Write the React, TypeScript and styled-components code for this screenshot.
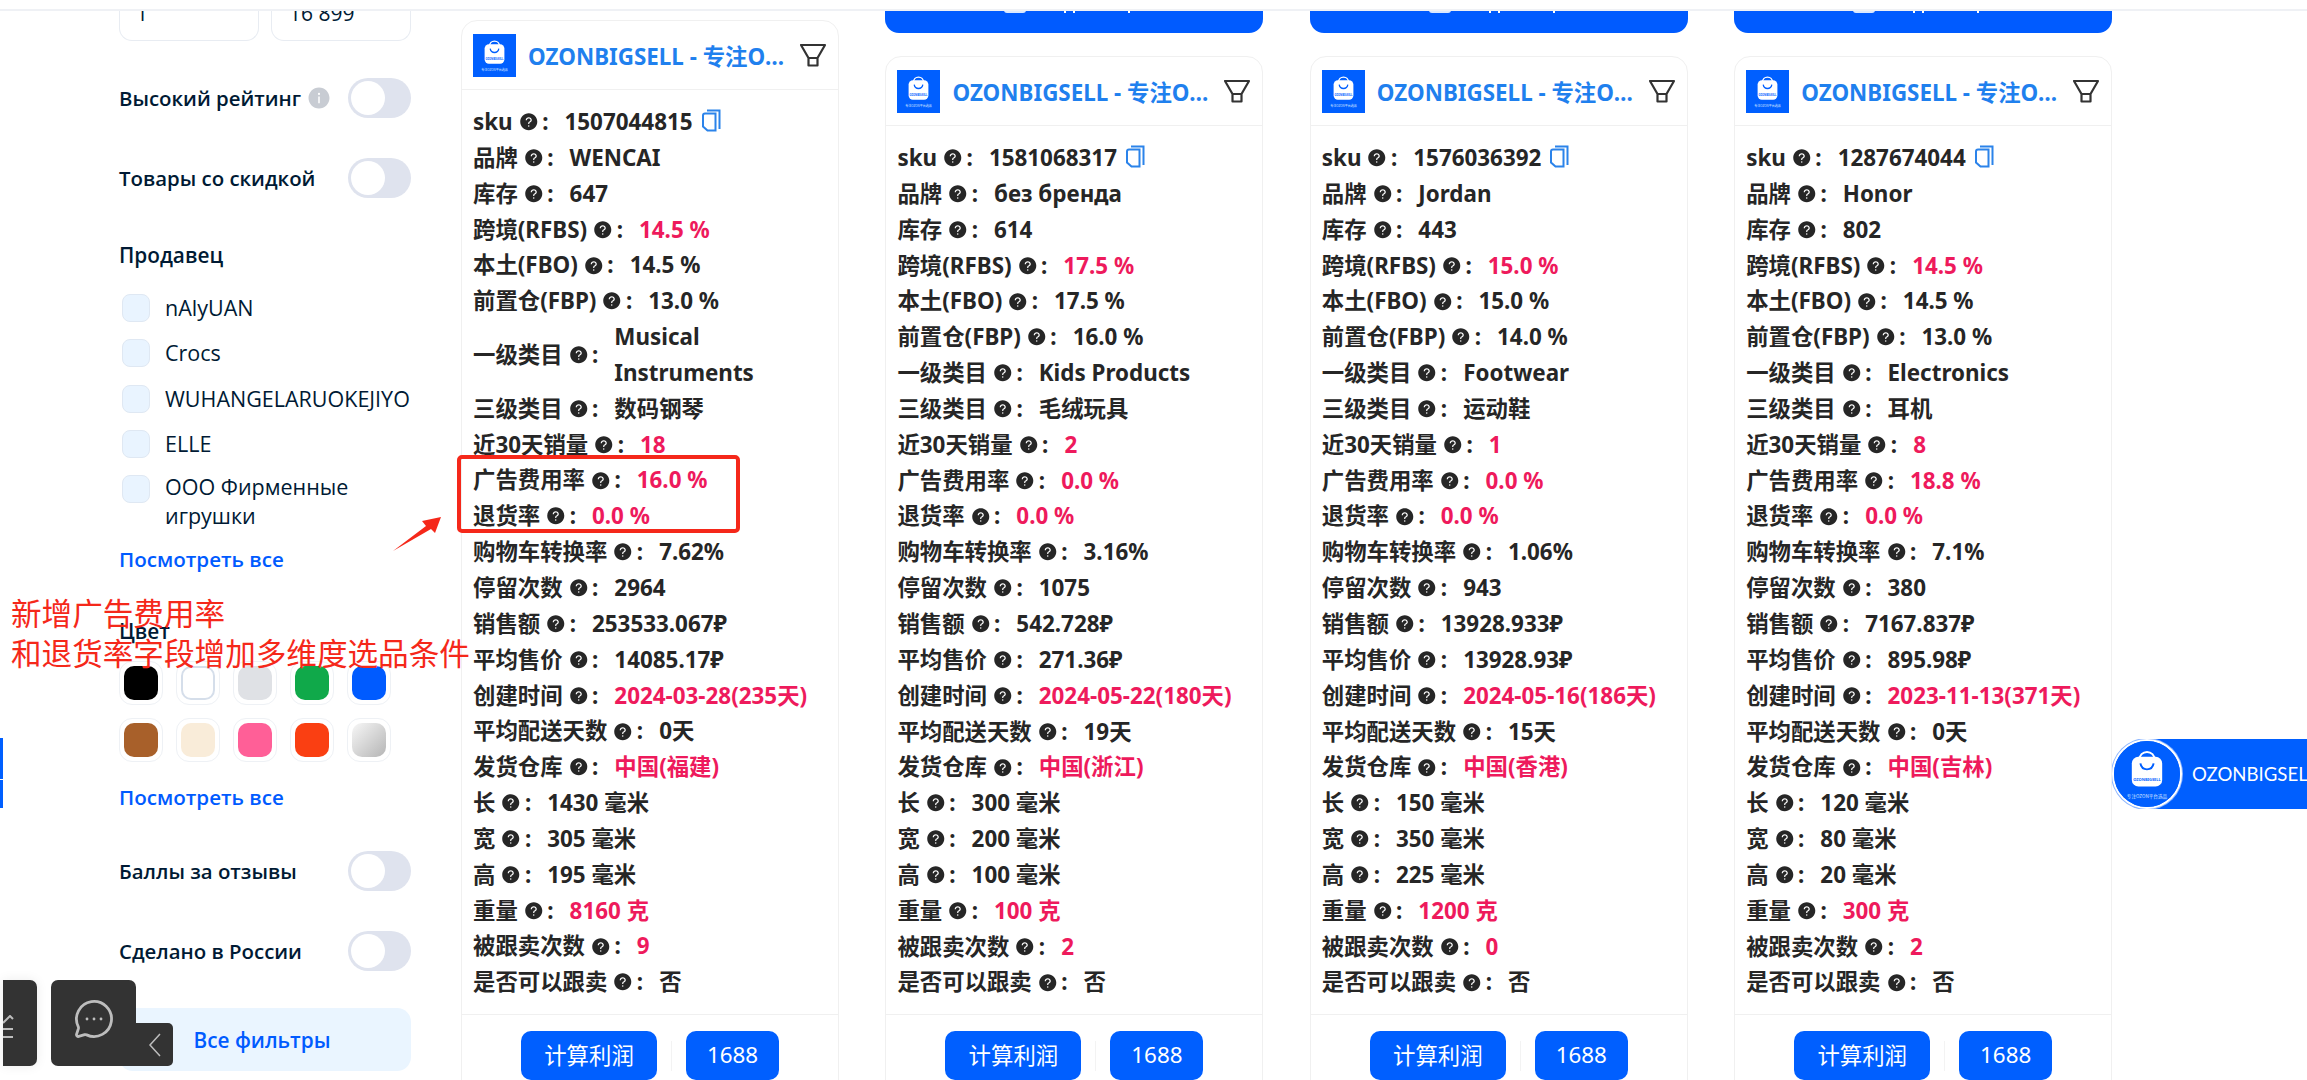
import React from "react";
import styled, { createGlobalStyle } from "styled-components";
import { AiFillQuestionCircle, AiFillInfoCircle } from "react-icons/ai";
import { MessageCircleMore } from "lucide-react";

const Global = createGlobalStyle`
  html, body { margin: 0; padding: 0; background: #fff; overflow: hidden; }
  * { box-sizing: border-box; }
`;

const Page = styled.div`
  position: relative;
  width: 2307px;
  height: 1080px;
  overflow: hidden;
  display: flex;
  background: #fff;
  font-family: "Noto Sans", "Noto Sans CJK SC", sans-serif;
`;

const TopBar = styled.div`
  position: absolute;
  left: 0;
  top: 0;
  width: 100%;
  height: 11px;
  background: #fff;
  border-bottom: 2px solid #eff1f5;
  z-index: 5;
`;

/* ---- sidebar ---- */
const Sidebar = styled.aside`
  width: 292px;
  margin-left: 119px;
  flex: none;
  display: flex;
  flex-direction: column;
  font-family: "Open Sans", "Noto Sans", sans-serif;
  color: #001a34;
`;
const RangeRow = styled.div`
  display: grid;
  grid-template-columns: 140px 140px;
  gap: 12px;
  height: 41px;
`;
const RangeInput = styled.div`
  border: 1px solid #e8ecf2;
  border-top: none;
  border-radius: 0 0 13px 13px;
  padding-left: ${(p: { $pad: number }) => p.$pad}px;
  font-size: 21px;
  line-height: 26px;
  color: #001a34;
`;
const ToggleRow = styled.div<{ $top: number }>`
  display: flex;
  align-items: center;
  height: 40px;
  margin-top: ${(p) => p.$top}px;
`;
const ToggleLabel = styled.span`
  font-size: 20.4px;
  font-weight: 600;
  white-space: nowrap;
  margin-top: -1px;
`;
const InfoMark = styled.span`
  display: inline-flex;
  margin-left: 6px;
  color: #c8ccd3;
`;
const Toggle = styled.span`
  margin-left: auto;
  width: 63px;
  height: 40px;
  border-radius: 20px;
  background: #dfe3ee;
  padding: 3px;
  display: flex;
`;
const Knob = styled.span`
  width: 34px;
  height: 34px;
  border-radius: 50%;
  background: #fff;
`;
const SectionTitle = styled.div<{ $top: number }>`
  font-size: 20.8px;
  font-weight: 600;
  line-height: 28px;
  height: 28px;
  margin-top: ${(p) => p.$top}px;
`;
const CheckList = styled.div`
  display: flex;
  flex-direction: column;
  gap: 17.3px;
  padding-top: 25px;
`;
const CheckRow = styled.div`
  display: flex;
  gap: 15px;
  padding-left: 3px;
`;
const CheckBox = styled.span`
  flex: none;
  width: 28px;
  height: 28px;
  border-radius: 8px;
  background: #e9f4ff;
  border: 1px solid #dfe8f3;
`;
const CheckText = styled.span<{ $wrap?: boolean }>`
  font-size: 21.5px;
  line-height: 29px;
  width: 246px;
  margin-top: ${(p) => (p.$wrap ? "-3px" : "-1px")};
  overflow: hidden;
  white-space: ${(p) => (p.$wrap ? "normal" : "nowrap")};
`;
const SeeAll = styled.a<{ $top: number }>`
  display: block;
  font-size: 20.6px;
  font-weight: 600;
  line-height: 28px;
  color: #005bff;
  margin-top: ${(p) => p.$top}px;
`;
const Swatches = styled.div`
  display: grid;
  grid-template-columns: repeat(5, 44px);
  gap: 13px;
  margin-top: 16px;
`;
const SwatchRing = styled.div`
  width: 44px;
  height: 44px;
  border-radius: 13px;
  border: 1px solid #eef1f5;
  padding: 4px;
`;
const SwatchFill = styled.div<{ $fill: string; $outlined?: boolean }>`
  width: 100%;
  height: 100%;
  border-radius: 10px;
  background: ${(p) => p.$fill};
  border: ${(p) => (p.$outlined ? "2px solid #d5deea" : "none")};
`;
const AllFilters = styled.button`
  margin-top: 37px;
  height: 63px;
  border: none;
  border-radius: 14px;
  background: #eaf5ff;
  color: #005bff;
  font: 600 20.8px "Open Sans", "Noto Sans", sans-serif;
  padding-left: 0;
`;

/* ---- product columns ---- */
const Columns = styled.main`
  margin-left: 50px;
  display: grid;
  grid-template-columns: repeat(4, 378px);
  column-gap: 46.4px;
  align-items: start;
`;
const Column = styled.section`
  display: flex;
  flex-direction: column;
`;
const FirstSpacer = styled.div`
  height: 20px;
`;
const Stub = styled.div`
  height: 33px;
  background: #005bff;
  border-radius: 0 0 14px 14px;
  margin-bottom: 23px;
  padding: 10px 0 0 119px;
  display: flex;
  align-items: flex-start;
`;
const StubBlob = styled.span`
  width: 22px;
  height: 3px;
  background: #dbe9ff;
  border-radius: 0 0 10px 10px;
`;
const StubTick = styled.span<{ $left: number }>`
  width: 2px;
  height: 3px;
  background: #fff;
  margin-left: ${(p) => p.$left}px;
`;
const Card = styled.article`
  border: 1px solid #f0f0f0;
  border-radius: 16px;
  height: 1100px;
  background: #fff;
`;
const CardHead = styled.header`
  height: 69px;
  border-bottom: 1px solid #f0f0f0;
  display: flex;
  align-items: center;
  padding: 0 12px 0 11px;
  gap: 12px;
`;
const CardTitle = styled.div`
  flex: 1;
  min-width: 0;
  font-size: 22.4px;
  font-weight: 700;
  color: #1f80ee;
  white-space: nowrap;
  overflow: hidden;
  text-overflow: ellipsis;
`;
const CardBody = styled.div`
  padding: 14px 11px 14px;
  font-size: 22.4px;
  line-height: 35.84px;
  font-weight: 700;
  color: #262626;
`;
const Row = styled.div`
  display: flex;
`;
const Label = styled.span`
  flex: none;
  display: inline-flex;
  align-items: center;
  white-space: nowrap;
`;
const Help = styled.span`
  display: inline-flex;
  margin: 0 4px 0 6px;
  color: #262626;
`;
const Colon = styled.span`
  margin-right: 16px;
`;
const Value = styled.span<{ $hot?: boolean }>`
  flex: 1;
  min-width: 0;
  color: ${(p) => (p.$hot ? "#ee1a5c" : "#262626")};
`;
const CopyMark = styled.svg`
  display: inline-block;
  vertical-align: -2px;
  margin-left: 8px;
`;
const CardFoot = styled.footer`
  border-top: 1px solid #f0f0f0;
  padding-top: 16px;
  display: flex;
  align-items: center;
  justify-content: center;
`;
const FootButton = styled.button<{ $w: number }>`
  width: ${(p) => p.$w}px;
  height: 49px;
  border: none;
  border-radius: 10px;
  background: #005fff;
  color: #fff;
  padding: 0 0 2px;
  font: 400 22.4px "Noto Sans", "Noto Sans CJK SC", sans-serif;
`;
const FootRule = styled.span`
  width: 1px;
  height: 30px;
  background: #f3f3f3;
  margin: 0 14px;
`;

/* ---- overlays ---- */
const NoteBox = styled.div`
  position: absolute;
  left: 457px;
  top: 455px;
  width: 283px;
  height: 78px;
  border: 4px solid #f5281a;
  border-radius: 5px;
  z-index: 3;
`;
const NoteArrow = styled.svg`
  position: absolute;
  left: 390px;
  top: 514px;
  z-index: 3;
`;
const NoteText = styled.div`
  position: absolute;
  left: 11px;
  top: 592px;
  font: 400 30.6px/40px "Noto Sans CJK SC", sans-serif;
  color: #f5281a;
  white-space: nowrap;
  z-index: 3;
`;
const FloatTab = styled.div`
  position: absolute;
  left: 2112px;
  top: 739px;
  width: 195px;
  height: 70px;
  display: flex;
  align-items: center;
  background: linear-gradient(90deg, transparent 33px, #005fff 33px);
  overflow: hidden;
  z-index: 4;
`;
const FloatDisc = styled.div`
  flex: none;
  width: 70px;
  height: 70px;
  border-radius: 50%;
  border: 2px solid #fff;
  box-shadow: 0 0 0 1px #8db6ff;
  background: #005fff;
  overflow: hidden;
`;
const FloatName = styled.span`
  margin-left: 10px;
  font: 400 18.6px "Lato", "Noto Sans", sans-serif;
  color: #fff;
  white-space: nowrap;
`;
const EdgeBar = styled.div`
  position: absolute;
  left: 0;
  top: 738px;
  width: 3px;
  height: 70px;
  background: linear-gradient(#005fff 58%, #fff 58%, #fff 60%, #005fff 60%);
`;
const Dock = styled.div`
  position: absolute;
  left: 3px;
  top: 980px;
  display: flex;
  align-items: flex-end;
  z-index: 4;
`;
const DockCut = styled.div`
  width: 34px;
  height: 86px;
  background: #333;
  border-radius: 0 7px 7px 0;
  margin-right: 14px;
  box-shadow: 0 0 12px rgba(0, 0, 0, 0.08);
  display: flex;
  align-items: flex-end;
  padding-bottom: 27px;
`;
const DockChat = styled.div`
  width: 85px;
  height: 86px;
  background: #333;
  border-radius: 7px 7px 0 7px;
  color: #bdbdbd;
  display: flex;
  align-items: center;
  justify-content: center;
  padding-bottom: 8px;
`;
const DockFold = styled.div`
  width: 37px;
  height: 43px;
  background: #333;
  border-radius: 0 5px 5px 0;
  display: flex;
  align-items: center;
  justify-content: center;
`;

/* ---- drawings ---- */
const Logo = ({ size }: { size: number }) => (
  <svg width={size} height={size} viewBox="0 0 100 100" style={{ flex: "none", display: "block" }}>
    <rect width="100" height="100" fill="#005fff" />
    <path d="M38 30 C38 12 62 12 62 30" fill="none" stroke="#fff" strokeWidth="3" />
    <rect x="27" y="24" width="46" height="45" rx="10" fill="#fff" />
    <path d="M40 34 C42 46 58 46 60 34" fill="none" stroke="#005fff" strokeWidth="3" />
    <text x="50" y="60" textAnchor="middle" fontSize="6" fontWeight="700" fill="#005fff" fontFamily="Noto Sans">OZONBIGSELL</text>
    <text x="50" y="87" textAnchor="middle" fontSize="7" fill="#dbe9ff" fontFamily="Noto Sans CJK SC">专注OZON平台选品</text>
  </svg>
);

const Funnel = () => (
  <svg width="26" height="24" viewBox="0 0 26 24" fill="none" stroke="#333" strokeWidth="2.2" style={{ flex: "none" }}>
    <path d="M1 2 H25 L17.5 15 V22.5 H8.5 V15 Z M8.5 15 H17.5" strokeLinejoin="round" />
  </svg>
);

const CopyIcon = () => (
  <CopyMark width="20" height="23" viewBox="0 0 20 23" fill="none" stroke="#2b83ea" strokeWidth="2">
    <path d="M6 1.5 H18.5 V20" />
    <path d="M2 6.5 V17.5 L6.5 21.5 H14.5 V4.5 H4 Q2 4.5 2 6.5 Z" />
  </CopyMark>
);

const labels = [
  "sku", "品牌", "库存", "跨境(RFBS)", "本土(FBO)", "前置仓(FBP)", "一级类目", "三级类目",
  "近30天销量", "广告费用率", "退货率", "购物车转换率", "停留次数", "销售额", "平均售价",
  "创建时间", "平均配送天数", "发货仓库", "长", "宽", "高", "重量", "被跟卖次数", "是否可以跟卖",
];
const hotRows = new Set([3, 8, 9, 10, 15, 17, 21, 22]);

const products: string[][] = [
  ["1507044815", "WENCAI", "647", "14.5 %", "14.5 %", "13.0 %", "Musical Instruments", "数码钢琴", "18", "16.0 %", "0.0 %", "7.62%", "2964", "253533.067₽", "14085.17₽", "2024-03-28(235天)", "0天", "中国(福建)", "1430 毫米", "305 毫米", "195 毫米", "8160 克", "9", "否"],
  ["1581068317", "без бренда", "614", "17.5 %", "17.5 %", "16.0 %", "Kids Products", "毛绒玩具", "2", "0.0 %", "0.0 %", "3.16%", "1075", "542.728₽", "271.36₽", "2024-05-22(180天)", "19天", "中国(浙江)", "300 毫米", "200 毫米", "100 毫米", "100 克", "2", "否"],
  ["1576036392", "Jordan", "443", "15.0 %", "15.0 %", "14.0 %", "Footwear", "运动鞋", "1", "0.0 %", "0.0 %", "1.06%", "943", "13928.933₽", "13928.93₽", "2024-05-16(186天)", "15天", "中国(香港)", "150 毫米", "350 毫米", "225 毫米", "1200 克", "0", "否"],
  ["1287674044", "Honor", "802", "14.5 %", "14.5 %", "13.0 %", "Electronics", "耳机", "8", "18.8 %", "0.0 %", "7.1%", "380", "7167.837₽", "895.98₽", "2023-11-13(371天)", "0天", "中国(吉林)", "120 毫米", "80 毫米", "20 毫米", "300 克", "2", "否"],
];

const swatchColors = [
  "#000", "#fff", "#dfe1e5", "#10a94a", "#005bff",
  "#a8602a", "#f9ecd9", "#ff5f97", "#fa3f12", "linear-gradient(135deg,#f7f7f7,#b5b5b5)",
];
const sellers = ["nAlyUAN", "Crocs", "WUHANGELARUOKEJIYOUXIANGONGSI", "ELLE", "ООО Фирменные игрушки"];

const ProductCard = ({ values }: { values: string[] }) => (
  <Card>
    <CardHead>
      <Logo size={43} />
      <CardTitle>OZONBIGSELL - 专注OZON平台选品</CardTitle>
      <Funnel />
    </CardHead>
    <CardBody>
      {labels.map((label, i) => (
        <Row key={label}>
          <Label>
            {label}
            <Help><AiFillQuestionCircle size={19.5} /></Help>
            <Colon>:</Colon>
          </Label>
          <Value $hot={hotRows.has(i)}>
            {values[i]}
            {i === 0 && <CopyIcon />}
          </Value>
        </Row>
      ))}
    </CardBody>
    <CardFoot>
      <FootButton $w={136}>计算利润</FootButton>
      <FootRule />
      <FootButton $w={93}>1688</FootButton>
    </CardFoot>
  </Card>
);

const Switch = () => (
  <Toggle><Knob /></Toggle>
);

export default function App() {
  return (
    <Page>
      <Global />
      <TopBar />
      <Sidebar>
        <RangeRow>
          <RangeInput $pad={16}>1</RangeInput>
          <RangeInput $pad={17}>16 899</RangeInput>
        </RangeRow>
        <ToggleRow $top={37}>
          <ToggleLabel>Высокий рейтинг</ToggleLabel>
          <InfoMark><AiFillInfoCircle size={24} /></InfoMark>
          <Switch />
        </ToggleRow>
        <ToggleRow $top={40}>
          <ToggleLabel>Товары со скидкой</ToggleLabel>
          <Switch />
        </ToggleRow>
        <SectionTitle $top={43}>Продавец</SectionTitle>
        <CheckList>
          {sellers.map((s, i) => (
            <CheckRow key={s}>
              <CheckBox />
              <CheckText $wrap={i === 4}>{s}</CheckText>
            </CheckRow>
          ))}
        </CheckList>
        <SeeAll $top={15}>Посмотреть все</SeeAll>
        <SectionTitle $top={44}>Цвет</SectionTitle>
        <Swatches>
          {swatchColors.map((c, i) => (
            <SwatchRing key={c}>
              <SwatchFill $fill={c} $outlined={i === 1} />
            </SwatchRing>
          ))}
        </Swatches>
        <SeeAll $top={21}>Посмотреть все</SeeAll>
        <ToggleRow $top={40}>
          <ToggleLabel>Баллы за отзывы</ToggleLabel>
          <Switch />
        </ToggleRow>
        <ToggleRow $top={40}>
          <ToggleLabel>Сделано в России</ToggleLabel>
          <Switch />
        </ToggleRow>
        <AllFilters>Все фильтры</AllFilters>
      </Sidebar>

      <Columns>
        {products.map((values, i) => (
          <Column key={values[0]}>
            {i === 0 ? (
              <FirstSpacer />
            ) : (
              <Stub>
                <StubBlob />
                <StubTick $left={38} />
                <StubTick $left={7} />
                <StubTick $left={53} />
              </Stub>
            )}
            <ProductCard values={values} />
          </Column>
        ))}
      </Columns>

      <NoteBox />
      <NoteArrow width="54" height="40" viewBox="0 0 54 40">
        <path d="M3 37 L36 12 L32 7 L51 3 L45 19 L41 15 Z" fill="#f5281a" />
      </NoteArrow>
      <NoteText>
        新增广告费用率
        <br />
        和退货率字段增加多维度选品条件
      </NoteText>

      <FloatTab>
        <FloatDisc><Logo size={66} /></FloatDisc>
        <FloatName>OZONBIGSELL</FloatName>
      </FloatTab>

      <EdgeBar />
      <Dock>
        <DockCut>
          <svg width="11" height="24" viewBox="0 0 11 24" fill="none" stroke="#bdbdbd" strokeWidth="2">
            <path d="M0 8 L7 1 L10 4 M0 14 H10 M0 22 H10" />
          </svg>
        </DockCut>
        <DockChat><MessageCircleMore size={42} strokeWidth={1.6} /></DockChat>
        <DockFold>
          <svg width="14" height="24" viewBox="0 0 14 24" fill="none" stroke="#bdbdbd" strokeWidth="1.5">
            <path d="M12 1 L2 12 L12 23" />
          </svg>
        </DockFold>
      </Dock>
    </Page>
  );
}
